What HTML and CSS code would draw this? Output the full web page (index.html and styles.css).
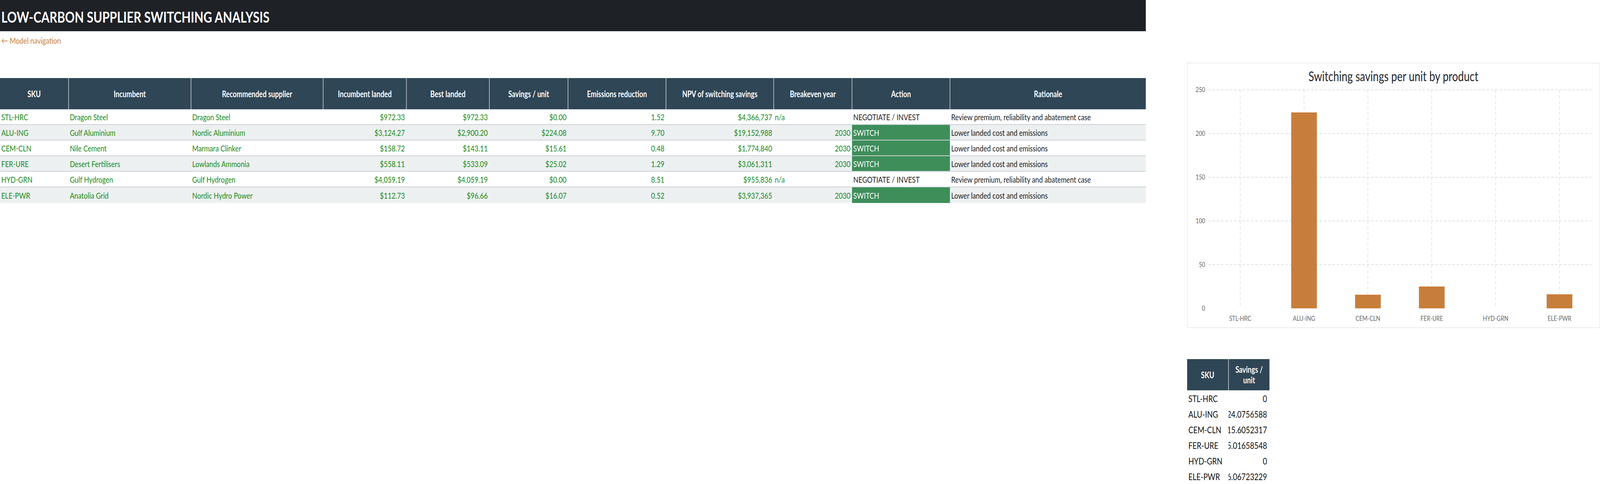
FILE: index.html
```html
<!DOCTYPE html>
<html lang="en">
<head>
<meta charset="utf-8">
<title>Low-carbon supplier switching analysis</title>
<link rel="stylesheet" href="styles.css">
</head>
<body>
<div class="frame">
<div class="page">
  <main class="main">
    <header class="titlebar"><h1>LOW-CARBON SUPPLIER SWITCHING ANALYSIS</h1></header>
    <a class="navlink" href="#">← Model navigation</a>
    <table class="grid">
      <colgroup>
        <col class="c-sku"><col class="c-inc"><col class="c-rec"><col class="c-il"><col class="c-bl"><col class="c-sav"><col class="c-em"><col class="c-npv"><col class="c-be"><col class="c-act"><col class="c-rat">
      </colgroup>
      <thead>
        <tr>
          <th>SKU</th><th>Incumbent</th><th>Recommended supplier</th><th>Incumbent landed</th><th>Best landed</th><th>Savings / unit</th><th>Emissions reduction</th><th>NPV of switching savings</th><th>Breakeven year</th><th>Action</th><th>Rationale</th>
        </tr>
      </thead>
      <tbody>
        <tr>
          <td class="g">STL-HRC</td><td class="g">Dragon Steel</td><td class="g">Dragon Steel</td><td class="g r">$972.33</td><td class="g r">$972.33</td><td class="g r">$0.00</td><td class="g r">1.52</td><td class="g r">$4,366,737</td><td class="g">n/a</td><td class="d">NEGOTIATE / INVEST</td><td class="d">Review premium, reliability and abatement case</td>
        </tr>
        <tr class="alt">
          <td class="g">ALU-ING</td><td class="g">Gulf Aluminium</td><td class="g">Nordic Aluminium</td><td class="g r">$3,124.27</td><td class="g r">$2,900.20</td><td class="g r">$224.08</td><td class="g r">9.70</td><td class="g r">$19,152,988</td><td class="g r">2030</td><td class="sw">SWITCH</td><td class="d">Lower landed cost and emissions</td>
        </tr>
        <tr>
          <td class="g">CEM-CLN</td><td class="g">Nile Cement</td><td class="g">Marmara Clinker</td><td class="g r">$158.72</td><td class="g r">$143.11</td><td class="g r">$15.61</td><td class="g r">0.48</td><td class="g r">$1,774,840</td><td class="g r">2030</td><td class="sw">SWITCH</td><td class="d">Lower landed cost and emissions</td>
        </tr>
        <tr class="alt">
          <td class="g">FER-URE</td><td class="g">Desert Fertilisers</td><td class="g">Lowlands Ammonia</td><td class="g r">$558.11</td><td class="g r">$533.09</td><td class="g r">$25.02</td><td class="g r">1.29</td><td class="g r">$3,061,311</td><td class="g r">2030</td><td class="sw">SWITCH</td><td class="d">Lower landed cost and emissions</td>
        </tr>
        <tr>
          <td class="g">HYD-GRN</td><td class="g">Gulf Hydrogen</td><td class="g">Gulf Hydrogen</td><td class="g r">$4,059.19</td><td class="g r">$4,059.19</td><td class="g r">$0.00</td><td class="g r">8.51</td><td class="g r">$955,836</td><td class="g">n/a</td><td class="d">NEGOTIATE / INVEST</td><td class="d">Review premium, reliability and abatement case</td>
        </tr>
        <tr class="alt">
          <td class="g">ELE-PWR</td><td class="g">Anatolia Grid</td><td class="g">Nordic Hydro Power</td><td class="g r">$112.73</td><td class="g r">$96.66</td><td class="g r">$16.07</td><td class="g r">0.52</td><td class="g r">$3,937,365</td><td class="g r">2030</td><td class="sw">SWITCH</td><td class="d">Lower landed cost and emissions</td>
        </tr>
      </tbody>
    </table>
  </main>

  <aside class="side">
    <div class="chart">
      <svg class="chart-svg" width="1347" height="677" viewBox="0 0 1347 677" xmlns="http://www.w3.org/2000/svg">
        <text class="c-title" x="673" y="46" text-anchor="middle">Switching savings per unit by product</text>
        <g class="c-grid">
          <line x1="68" y1="68" x2="1320" y2="68"/>
          <line x1="68" y1="180" x2="1320" y2="180"/>
          <line x1="68" y1="292" x2="1320" y2="292"/>
          <line x1="68" y1="404" x2="1320" y2="404"/>
          <line x1="68" y1="516" x2="1320" y2="516"/>
          <line x1="172.3" y1="68" x2="172.3" y2="622"/>
          <line x1="381" y1="68" x2="381" y2="622"/>
          <line x1="589.7" y1="68" x2="589.7" y2="622"/>
          <line x1="798.3" y1="68" x2="798.3" y2="622"/>
          <line x1="1007" y1="68" x2="1007" y2="622"/>
          <line x1="1215.7" y1="68" x2="1215.7" y2="622"/>
        </g>
        <g class="c-ylab">
          <text x="58" y="74.5" text-anchor="end">250</text>
          <text x="58" y="186.5" text-anchor="end">200</text>
          <text x="58" y="298.5" text-anchor="end">150</text>
          <text x="58" y="410.5" text-anchor="end">100</text>
          <text x="58" y="522.5" text-anchor="end">50</text>
          <text x="58" y="634.5" text-anchor="end">0</text>
        </g>
        <g class="c-bars">
          <rect x="339" y="126" width="84" height="502"/>
          <rect x="547.7" y="593" width="84" height="35"/>
          <rect x="756.3" y="572" width="84" height="56"/>
          <rect x="1173.7" y="592" width="84" height="36"/>
        </g>
        <g class="c-xlab">
          <text x="172.3" y="660" text-anchor="middle">STL-HRC</text>
          <text x="381" y="660" text-anchor="middle">ALU-ING</text>
          <text x="589.7" y="660" text-anchor="middle">CEM-CLN</text>
          <text x="798.3" y="660" text-anchor="middle">FER-URE</text>
          <text x="1007" y="660" text-anchor="middle">HYD-GRN</text>
          <text x="1215.7" y="660" text-anchor="middle">ELE-PWR</text>
        </g>
      </svg>
    </div>

    <table class="mini">
      <colgroup><col class="m-sku"><col class="m-sav"></colgroup>
      <thead>
        <tr><th>SKU</th><th>Savings /<br>unit</th></tr>
      </thead>
      <tbody>
        <tr><td>STL-HRC</td><td><div class="num">0</div></td></tr>
        <tr><td>ALU-ING</td><td><div class="num">224.0756588</div></td></tr>
        <tr><td>CEM-CLN</td><td><div class="num">15.6052317</div></td></tr>
        <tr><td>FER-URE</td><td><div class="num">25.01658548</div></td></tr>
        <tr><td>HYD-GRN</td><td><div class="num">0</div></td></tr>
        <tr><td>ELE-PWR</td><td><div class="num">16.06723229</div></td></tr>
      </tbody>
    </table>
  </aside>
</div>
</div>
</body>
</html>
```

FILE: styles.css
```css
html, body {
  margin: 0;
  padding: 0;
  background: #ffffff;
}

body {
  font-family: Lato, "Open Sans", "Liberation Sans", sans-serif;
  color: #222222;
}

.frame {
  width: 100%;
  height: 1240px;
  overflow: hidden;
}

/* The sheet is designed for a 5228px-wide canvas. */
.page {
  display: flex;
  align-items: flex-start;
  width: 5228px;
  transform-origin: 0 0;
}

@media (max-width: 5227px) {
  html, body {
    overflow: hidden;
  }
  .page {
    transform: scaleX(0.78347);
  }
}
@media (max-width: 4095px) {
  .page {
    transform: scaleX(0.7);
  }
}

.main {
  width: 3744px;
  flex: 0 0 3744px;
  display: flex;
  flex-direction: column;
}

.titlebar {
  height: 80px;
  box-sizing: border-box;
  background: #1e2126;
  padding: 7px 0 0 4px;
}

.titlebar h1 {
  margin: 0;
  font-size: 39px;
  line-height: 73px;
  font-weight: 700;
  color: #ffffff;
  white-space: nowrap;
}

.navlink {
  align-self: flex-start;
  font-size: 22px;
  line-height: 47px;
  color: #c8803d;
  text-decoration: none;
  padding-left: 4px;
}

.grid {
  margin-top: 73px;
  width: 3744px;
  table-layout: fixed;
  border-collapse: collapse;
  font-size: 22px;
}

.c-sku { width: 224px; }
.c-inc { width: 400px; }
.c-rec { width: 432px; }
.c-il  { width: 272px; }
.c-bl  { width: 271px; }
.c-sav { width: 257px; }
.c-em  { width: 320px; }
.c-npv { width: 352px; }
.c-be  { width: 256px; }
.c-act { width: 320px; }
.c-rat { width: 640px; }

.grid th {
  height: 80px;
  padding: 0 4px;
  background: #2f4656;
  color: #ffffff;
  font-weight: 700;
  text-align: center;
  vertical-align: middle;
  white-space: nowrap;
  border-left: 2px solid #c3cbd1;
}

.grid th:first-child {
  border-left: 0;
}

.grid td {
  height: 38px;
  padding: 0 5px 0 4px;
  white-space: nowrap;
  overflow: visible;
  vertical-align: middle;
  text-align: left;
  border-bottom: 2px solid #cdd1d5;
}

.grid tbody tr:last-child td {
  border-bottom: 0;
  height: 40px;
}

.grid tr.alt td {
  background: #edf0f1;
}

.grid td.g {
  color: #1a8a1a;
}

.grid td.r {
  text-align: right;
}

.grid td.d {
  color: #222222;
}

.grid tr td.sw {
  background: #3e8e5a;
  color: #ffffff;
}

.side {
  flex: 0 0 1349px;
  width: 1349px;
  margin-left: 135px;
  padding-top: 161px;
  display: flex;
  flex-direction: column;
}

.chart {
  width: 1349px;
  height: 679px;
  box-sizing: border-box;
  border: 1px solid #d9d9d9;
  background: #ffffff;
}

.chart-svg {
  display: block;
  font-family: Lato, "Open Sans", "Liberation Sans", sans-serif;
}

.c-title {
  font-size: 34px;
  fill: #23262b;
}

.c-grid line {
  stroke: #d4d4d4;
  stroke-width: 1.4;
  stroke-dasharray: 8 6;
}

.c-ylab text,
.c-xlab text {
  font-size: 18px;
  fill: #666666;
}

.c-bars rect {
  fill: #c87e3b;
}

.mini {
  margin-top: 80px;
  width: 269px;
  table-layout: fixed;
  border-collapse: collapse;
  font-size: 24px;
}

.m-sku { width: 135px; }
.m-sav { width: 134px; }

.mini th {
  height: 80px;
  padding: 0 4px;
  background: #2f4656;
  color: #ffffff;
  font-size: 22px;
  line-height: 27px;
  font-weight: 700;
  text-align: center;
  vertical-align: middle;
}

.mini th + th {
  border-left: 2px solid #c3cbd1;
}

.mini td {
  height: 40px;
  padding: 0 0 0 4px;
  color: #111111;
  white-space: nowrap;
  vertical-align: middle;
  overflow: hidden;
}

.mini td + td {
  padding: 0 8px 0 0;
}

.num {
  display: flex;
  justify-content: flex-end;
  overflow: hidden;
  white-space: nowrap;
}
```
